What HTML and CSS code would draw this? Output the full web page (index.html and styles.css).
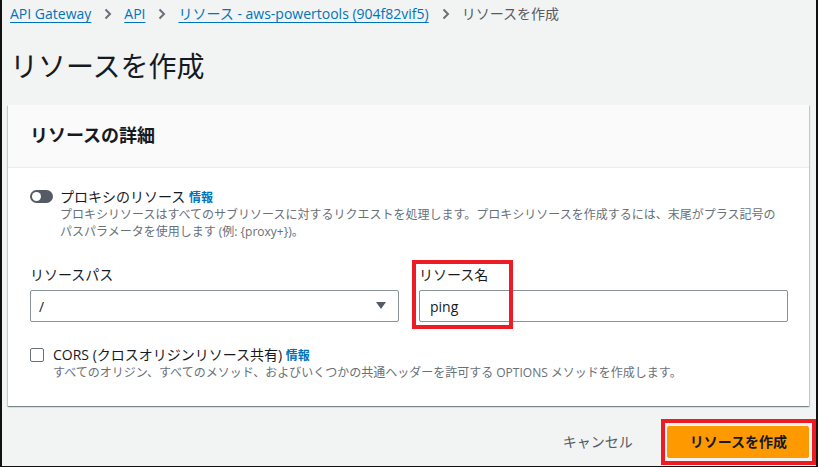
FILE: index.html
```html
<!DOCTYPE html>
<html lang="ja">
<head>
<meta charset="utf-8">
<title>リソースを作成</title>
<link rel="stylesheet" href="styles.css">
</head>
<body>
<div class="frame">
  <nav class="crumbs">
    <a class="crumb-link" href="#">API Gateway</a>
    <span class="chev"><svg width="8" height="12" viewBox="0 0 8 12"><path d="M1.5 1.5 L6 6 L1.5 10.5" fill="none" stroke="#687078" stroke-width="2"/></svg></span>
    <a class="crumb-link" href="#">API</a>
    <span class="chev"><svg width="8" height="12" viewBox="0 0 8 12"><path d="M1.5 1.5 L6 6 L1.5 10.5" fill="none" stroke="#687078" stroke-width="2"/></svg></span>
    <a class="crumb-link" href="#">リソース - aws-powertools (904f82vif5)</a>
    <span class="chev"><svg width="8" height="12" viewBox="0 0 8 12"><path d="M1.5 1.5 L6 6 L1.5 10.5" fill="none" stroke="#687078" stroke-width="2"/></svg></span>
    <span class="crumb-current">リソースを作成</span>
  </nav>

  <h1 class="title">リソースを作成</h1>

  <section class="card">
    <header class="card-head">
      <h2 class="card-title">リソースの詳細</h2>
    </header>
    <div class="card-body">
      <div class="option">
        <span class="toggle"><span class="knob"></span></span>
        <div class="option-text">
          <div class="option-label">プロキシのリソース <a class="info" href="#">情報</a></div>
          <div class="option-desc">プロキシリソースはすべてのサブリソースに対するリクエストを処理します。プロキシリソースを作成するには、末尾がプラス記号の<br>パスパラメータを使用します (例: {proxy+})。</div>
        </div>
      </div>

      <div class="fields">
        <div class="field">
          <div class="field-label">リソースパス</div>
          <div class="control select">
            <span class="value">/</span>
            <svg class="caret" width="10" height="8" viewBox="0 0 10 8"><path d="M0 0 H10 L5 7 Z" fill="#545b64"/></svg>
          </div>
        </div>
        <div class="field marked">
          <div class="field-label">リソース名</div>
          <div class="control input"><span class="value">ping</span></div>
          <span class="mark mark-name"></span>
        </div>
      </div>

      <div class="option cors">
        <span class="checkbox"></span>
        <div class="option-text">
          <div class="option-label">CORS (クロスオリジンリソース共有) <a class="info" href="#">情報</a></div>
          <div class="option-desc">すべてのオリジン、すべてのメソッド、およびいくつかの共通ヘッダーを許可する OPTIONS メソッドを作成します。</div>
        </div>
      </div>
    </div>
  </section>

  <div class="actions">
    <button class="btn-link" type="button">キャンセル</button>
    <div class="primary-wrap">
      <button class="btn-primary" type="button">リソースを作成</button>
      <span class="mark mark-btn"></span>
    </div>
  </div>
</div>
</body>
</html>
```

FILE: styles.css
```css
* { box-sizing: border-box; }

html, body {
  margin: 0;
  padding: 0;
}

body {
  font-family: "Open Sans", "Noto Sans CJK JP", sans-serif;
  color: #16191f;
  background: #f2f3f3;
  font-size: 14px;
}

.frame {
  width: 818px;
  height: 467px;
  border-left: 2px solid #111;
  border-right: 2px solid #111;
  border-bottom: 1px solid #111;
  background: #f2f3f3;
  padding: 4px 7px 0 6px;
  overflow: hidden;
}

.crumbs {
  display: flex;
  align-items: center;
  height: 20px;
  padding-left: 2px;
  line-height: 20px;
}

.crumb-link {
  color: #0073bb;
  text-decoration: underline;
  text-underline-offset: 3px;
  text-decoration-thickness: 1px;
  white-space: nowrap;
}

.crumb-current {
  color: #545b64;
  white-space: nowrap;
}

.chev {
  display: flex;
  align-items: center;
  margin: 0 12px 0 13px;
}

.title {
  margin: 24px 0 0;
  padding-left: 2px;
  font-size: 28px;
  line-height: 36px;
  font-weight: 400;
  color: #16191f;
}

.card {
  margin-top: 21px;
  background: #fff;
  box-shadow: 0 1px 1px 0 rgba(0, 28, 36, 0.3), 1px 1px 1px 0 rgba(0, 28, 36, 0.15), -1px 1px 1px 0 rgba(0, 28, 36, 0.15);
}

.card-head {
  background: #fafafa;
  border-bottom: 1px solid #eaeded;
  padding: 19px 22px 20px;
}

.card-title {
  margin: 0;
  font-size: 18px;
  line-height: 23px;
  font-weight: 700;
}

.card-body {
  padding: 20px 21px 25px 22px;
}

.option {
  display: flex;
  align-items: flex-start;
}

.toggle {
  position: relative;
  flex: none;
  width: 23px;
  height: 13px;
  margin-top: 2px;
  margin-right: 7px;
  border-radius: 7px;
  background: #545b64;
}

.knob {
  position: absolute;
  left: 2px;
  top: 2px;
  width: 9px;
  height: 9px;
  border-radius: 50%;
  background: #fff;
}

.option-label {
  font-size: 14px;
  line-height: 17px;
  color: #16191f;
}

.info {
  color: #0073bb;
  font-weight: 700;
  font-size: 12px;
  text-decoration: none;
}

.option-desc {
  font-size: 12px;
  line-height: 17px;
  color: #687078;
}

.fields {
  display: grid;
  grid-template-columns: 1fr 1fr;
  column-gap: 20px;
  margin-top: 24px;
}

.field {
  position: relative;
}

.field-label {
  font-size: 14px;
  line-height: 22px;
  margin-bottom: 4px;
  color: #16191f;
}

.control {
  display: flex;
  align-items: center;
  height: 32px;
  border: 1px solid #879596;
  border-radius: 2px;
  background: #fff;
  padding: 0 12px 0 8px;
  font-size: 14px;
}

.select {
  justify-content: space-between;
}

.input {
  padding-left: 10px;
}

.caret {
  display: block;
}

.cors {
  margin-top: 24px;
}

.checkbox {
  flex: none;
  width: 14px;
  height: 14px;
  margin-top: 2px;
  margin-right: 9px;
  border: 1px solid #687078;
  border-radius: 2px;
  background: #fff;
}

.actions {
  display: flex;
  justify-content: flex-end;
  align-items: center;
  margin-top: 20px;
  gap: 14px;
}

.btn-link {
  border: 0;
  background: transparent;
  font-family: inherit;
  font-size: 14px;
  line-height: 20px;
  color: #545b64;
  padding: 0 20px;
  height: 32px;
}

.primary-wrap {
  position: relative;
}

.btn-primary {
  display: block;
  height: 32px;
  padding: 0 21px 0 22px;
  border: 1px solid #ff9900;
  border-radius: 2px;
  background: #ff9900;
  color: #16191f;
  font-family: inherit;
  font-size: 14px;
  font-weight: 700;
  line-height: 20px;
}

.mark {
  position: absolute;
  border: 4px solid #ed1c24;
  pointer-events: none;
}

.mark-name {
  left: -7px;
  top: -4px;
  width: 101px;
  height: 69px;
}

.mark-btn {
  left: -6px;
  top: -7px;
  right: -7px;
  bottom: -7px;
}
```
